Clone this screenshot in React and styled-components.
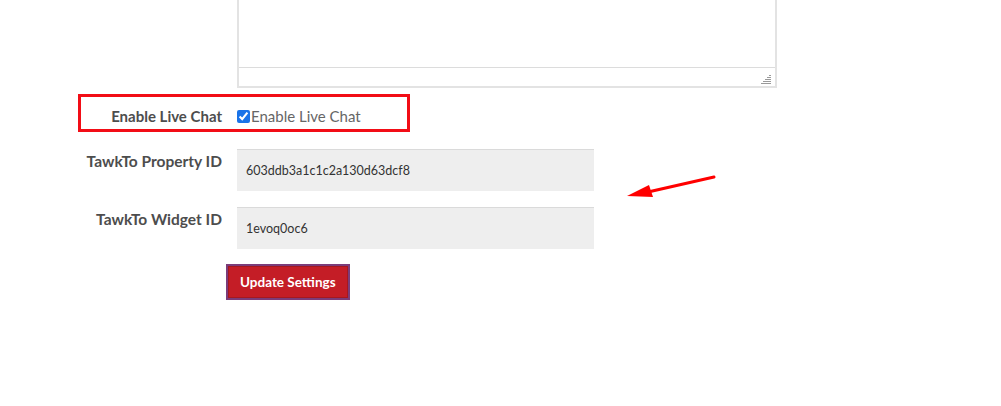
import React from "react";
import styled, { createGlobalStyle } from "styled-components";

const GlobalStyle = createGlobalStyle`
  body {
    margin: 0;
    background: #fff;
    font-family: Lato, "Liberation Sans", sans-serif;
  }
`;

const App = () => {
  return (
    <Page>
      <GlobalStyle />
      <Form>
        <Row>
          <Spacer />
          <Editor>
            <EditorBody />
            <StatusBar>
              <Grip viewBox="0 0 10 10">
                <path d="M8 1.5h2M6 3.5h4M4 5.5h6M2 7.5h8M0 9.5h10" stroke="#9a9a9a" strokeWidth="1" />
              </Grip>
            </StatusBar>
          </Editor>
        </Row>

        <CheckRow>
          <Highlight />
          <Label>Enable Live Chat</Label>
          <CheckLabel>
            <Check type="checkbox" defaultChecked />
            Enable Live Chat
          </CheckLabel>
        </CheckRow>

        <FieldRow gap={23}>
          <Label top>TawkTo Property ID</Label>
          <Input defaultValue="603ddb3a1c1c2a130d63dcf8" />
        </FieldRow>

        <FieldRow gap={16}>
          <Label top>TawkTo Widget ID</Label>
          <Input defaultValue="1evoq0oc6" />
        </FieldRow>

        <ButtonRow>
          <Button>Update Settings</Button>
        </ButtonRow>
      </Form>

      {/* annotation arrow */}
      <Arrow width="100" height="40" viewBox="0 0 100 40">
        <line x1="94" y1="7" x2="28" y2="22" stroke="#f00" strokeWidth="3" strokeLinecap="round" />
        <polygon points="7,26 29,15 33,27" fill="#f00" />
      </Arrow>
    </Page>
  );
};

const Page = styled.div`
  position: relative;
  width: 1001px;
  height: 406px;
  overflow: hidden;
`;

const Form = styled.div`
  display: flex;
  flex-direction: column;
  margin-top: -30px;
`;

const Row = styled.div`
  display: flex;
`;

const Spacer = styled.div`
  width: 237px;
  flex-shrink: 0;
`;

const Editor = styled.div`
  width: 536px;
  height: 114px;
  border: 2px solid #e3e3e3;
  display: flex;
  flex-direction: column;
`;

const EditorBody = styled.div`
  flex: 1;
  background: #fff;
`;

const StatusBar = styled.div`
  height: 18px;
  border-top: 1px solid #dcdcdc;
  display: flex;
  justify-content: flex-end;
  align-items: flex-end;
  padding: 0 4px 2px 0;
  box-sizing: border-box;
  height: 19px;
`;

const Grip = styled.svg`
  width: 10px;
  height: 10px;
`;

const CheckRow = styled.div`
  position: relative;
  display: flex;
  align-items: center;
  height: 20px;
  margin-top: 18px;
`;

const Highlight = styled.div`
  position: absolute;
  left: 78px;
  top: -12px;
  width: 326px;
  height: 32px;
  border: 3px solid #f20d16;
  pointer-events: none;
`;

const Label = styled.div`
  width: 222px;
  margin-right: 15px;
  flex-shrink: 0;
  text-align: right;
  font-size: ${(p) => (p.top ? "15.5px" : "15px")};
  font-weight: 700;
  line-height: 20px;
  color: #4d4d4d;
  padding-top: ${(p) => (p.top ? "2px" : "0")};
  box-sizing: border-box;
`;

const CheckLabel = styled.label`
  display: flex;
  align-items: center;
  font-size: 15px;
  color: #666;
`;

const Check = styled.input`
  width: 13px;
  height: 13px;
  margin: 0 1px 0 0;
  accent-color: #1a73e8;
`;

const FieldRow = styled.div`
  display: flex;
  align-items: flex-start;
  margin-top: ${(p) => p.gap}px;
`;

const Input = styled.input`
  width: 357px;
  height: 42px;
  box-sizing: border-box;
  border: none;
  border-top: 1px solid #dadada;
  background: #eeeeee;
  padding: 0 9px;
  font-family: Lato, "Liberation Sans", sans-serif;
  font-size: 12.5px;
  color: #333;
  outline: none;
`;

const ButtonRow = styled.div`
  display: flex;
  padding-left: 226px;
  margin-top: 15px;
`;

const Button = styled.button`
  height: 36px;
  padding: 0 12px;
  background: #c41d26;
  color: #fff;
  font-family: Lato, "Liberation Sans", sans-serif;
  font-size: 13.5px;
  font-weight: 700;
  border: 2px solid #7b3c7a;
  box-shadow: inset 0 0 0 1px #a51820;
  cursor: pointer;
`;

const Arrow = styled.svg`
  position: absolute;
  left: 620px;
  top: 170px;
`;

export default App;
